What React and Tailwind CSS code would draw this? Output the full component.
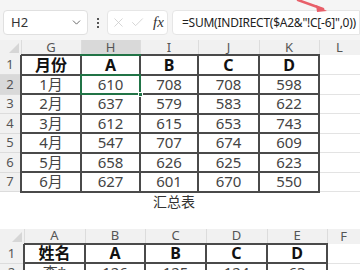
import { ChevronDown, X, Check } from "lucide-react";

const font = { fontFamily: '"Noto Sans", "Noto Sans CJK SC", sans-serif' };

const top = [
  ["月份", "A", "B", "C", "D"],
  ["1月", "610", "708", "708", "598"],
  ["2月", "637", "579", "583", "622"],
  ["3月", "612", "615", "653", "743"],
  ["4月", "547", "707", "674", "609"],
  ["5月", "658", "626", "625", "623"],
  ["6月", "627", "601", "670", "550"],
];

const bottom = [
  ["姓名", "A", "B", "C", "D"],
  ["李*", "126", "125", "124", "63"],
];

function Corner() {
  return (
    <svg width="10" height="10" viewBox="0 0 10 10" className="absolute right-[2px] bottom-[2px]">
      <path d="M10 0 L10 10 L0 10 Z" fill="#d6d6d6" />
    </svg>
  );
}

function Sheet({ cols, rowW, widths, rows, headH, rowH, selected }) {
  return (
    <table className="border-collapse table-fixed" style={{ width: 360 }}>
      <colgroup>
        <col style={{ width: rowW }} />
        {widths.map((w, i) => (
          <col key={i} style={{ width: w }} />
        ))}
      </colgroup>
      <tbody>
        <tr style={{ height: headH }}>
          <td className="relative bg-[#f1f1f1] border-r border-[#dcdcdc]">
            <Corner />
          </td>
          {cols.map((c, i) => (
            <td
              key={c}
              className={
                "text-center text-[13px] leading-none text-[#555] border-r border-[#dcdcdc] " +
                (selected && i === 1
                  ? "bg-[#d9d9d9] border-b-2 border-b-[#217346]"
                  : "bg-[#f1f1f1]")
              }
            >
              {c}
            </td>
          ))}
        </tr>
        {rows.map((r, ri) => (
          <tr key={ri} style={{ height: rowH }}>
            <td
              className={
                "text-center text-[13px] leading-none text-[#555] border-b border-[#dcdcdc] " +
                (selected && ri === 1 ? "bg-[#d9d9d9]" : "bg-[#f1f1f1]")
              }
            >
              {ri + 1}
            </td>
            {r.map((v, ci) => (
              <td
                key={ci}
                className={
                  "relative text-center leading-none border-2 border-[#4a4a4a] " +
                  (ri === 0 ? "text-[16px] font-bold text-[#111]" : "text-[15px] text-[#444]")
                }
              >
                {v}
                {selected && ri === 1 && ci === 1 && (
                  <div className="absolute inset-[-2px] border-2 border-[#217346]">
                    <div className="absolute right-[-4px] bottom-[-4px] w-[5px] h-[5px] bg-[#217346] border border-white" />
                  </div>
                )}
              </td>
            ))}
            <td className="border-b border-r border-[#e3e3e3]" />
          </tr>
        ))}
      </tbody>
    </table>
  );
}

export default function App() {
  return (
    <div className="relative w-[360px] h-[270px] overflow-hidden bg-white" style={font}>
      <div className="h-[40px] bg-[#f5f5f5] flex items-start pt-[10px] pl-[3px]">
        <div className="shrink-0 w-[85px] h-[25px] bg-white border border-[#e0e0e0] rounded-[4px] flex items-center justify-between pl-[7px] pr-[4px]">
          <span className="text-[13px] text-[#333]">H2</span>
          <ChevronDown size={13} strokeWidth={1.6} color="#555" />
        </div>
        <div className="shrink-0 w-[19px] h-[25px] flex flex-col items-center justify-center gap-[2px]">
          <span className="w-[2px] h-[2px] bg-[#555]" />
          <span className="w-[2px] h-[2px] bg-[#555]" />
          <span className="w-[2px] h-[2px] bg-[#555]" />
        </div>
        <div className="shrink-0 w-[61px] h-[25px] bg-white border border-[#e6e6e6] rounded-[4px] flex items-center pl-[3px] gap-[4px]">
          <X size={15} strokeWidth={1.2} color="#c8c8c8" />
          <Check size={15} strokeWidth={1.2} color="#c8c8c8" />
          <span className="ml-[4px] text-[15px] italic text-[#333]" style={{ fontFamily: '"Liberation Serif", serif' }}>
            fx
          </span>
        </div>
        <div className="flex-1 min-w-0 h-[25px] bg-white border border-[#e6e6e6] rounded-l-[4px] flex items-center pl-[9px] ml-[4px] overflow-hidden">
          <span className="text-[12px] text-[#222] whitespace-nowrap tracking-[-0.25px]">
            =SUM(INDIRECT($A2&"!C[-6]",0))
          </span>
        </div>
      </div>

      <Sheet
        cols={["G", "H", "I", "J", "K", "L"]}
        rowW={21}
        widths={[60, 59, 58, 61, 60, 41]}
        rows={top}
        headH={15}
        rowH={19.5}
        selected
      />

      <div className="h-[18px] text-[14px] text-[#333] leading-[18px] pl-[153px]">汇总表</div>

      <div className="h-[18px]" />

      <Sheet
        cols={["A", "B", "C", "D", "E", "F"]}
        rowW={24}
        widths={[61, 60, 61, 61, 60, 33]}
        rows={bottom}
        headH={15}
        rowH={19.5}
      />

      <svg className="absolute left-[296px] top-0" width="34" height="14" viewBox="0 0 34 14">
        <path d="M2 0 L27 9" stroke="#e8606a" strokeWidth="2.5" strokeLinecap="round" />
        <path d="M20 5 L31 11 L21 12 Z" fill="#e8606a" />
      </svg>
    </div>
  );
}
